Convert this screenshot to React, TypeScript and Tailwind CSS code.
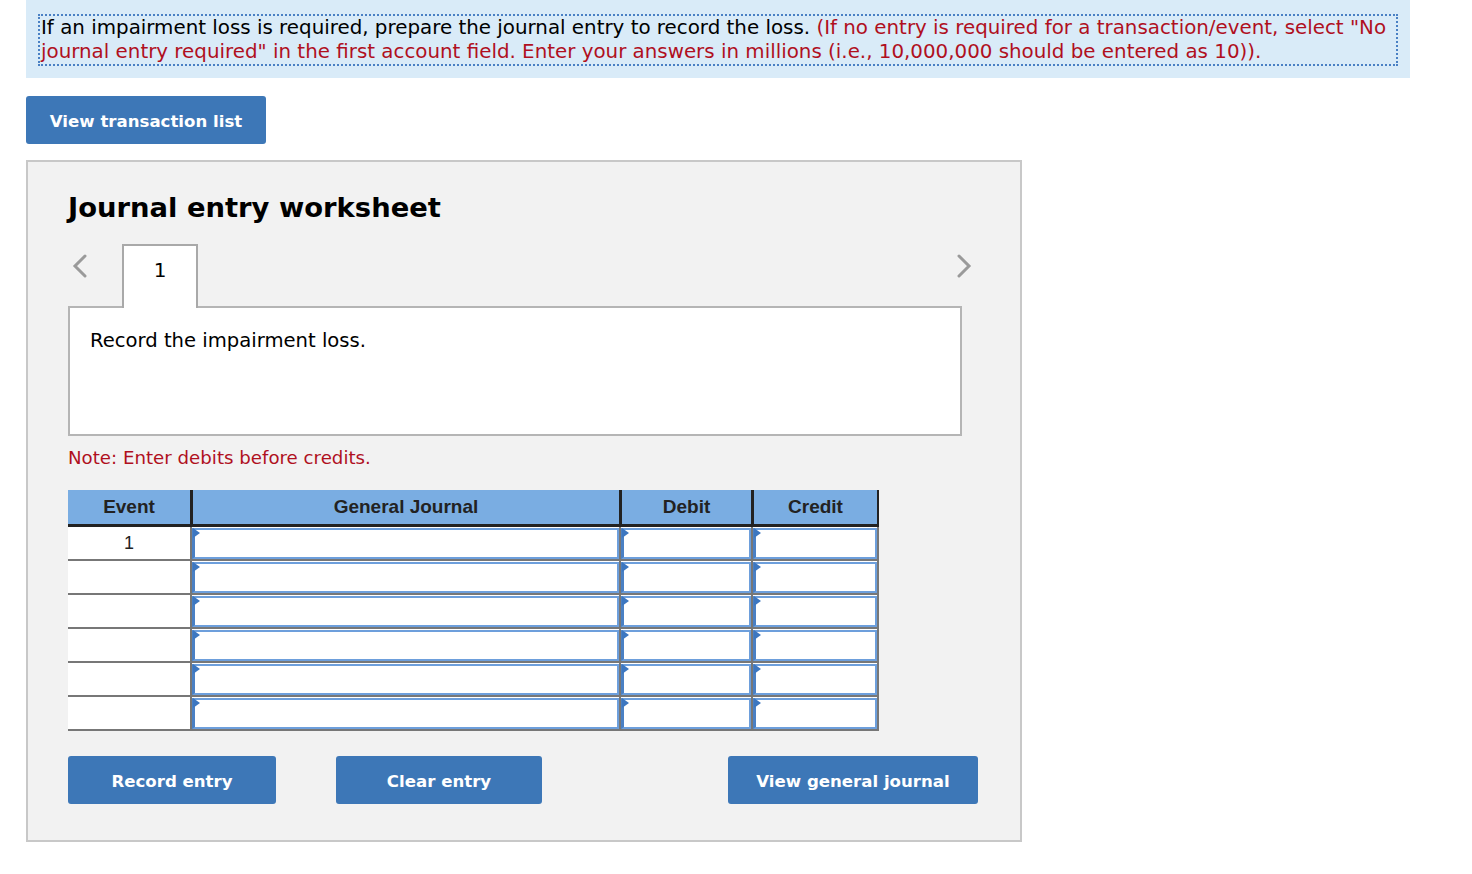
import React from 'react';

const verdana = { fontFamily: '"DejaVu Sans", Verdana, sans-serif' };
const arial = { fontFamily: '"Liberation Sans", Arial, sans-serif' };

function InputCell({ width }: { width: string }) {
  return (
    <div className={`${width} relative h-full border-l-2 border-[#777] bg-white`}>
      <div className="absolute inset-x-0 top-px bottom-0 border-2 border-[#6d9fdc] border-l-[3px] border-l-[#4a80c4]" />
      <div className="absolute left-[1px] top-[1px] h-0 w-0 border-y-[5px] border-l-[7px] border-y-transparent border-l-[#3d77c0]" />
    </div>
  );
}

function Row({ event }: { event?: string }) {
  return (
    <div className="flex h-[34px] border-b-2 border-[#777]">
      <div className="flex w-[122px] items-start justify-center bg-white pt-[3px] text-[18px] text-[#222]" style={arial}>
        {event}
      </div>
      <InputCell width="w-[429px]" />
      <InputCell width="w-[132px]" />
      <InputCell width="w-[126px]" />
      <div className="w-[2px] bg-[#777]" />
    </div>
  );
}

function BlueButton({ label, width }: { label: string; width: string }) {
  return (
    <button
      className={`${width} h-[48px] rounded-[3px] bg-[#3d77b7] pt-[4px] text-[16.6px] font-bold text-white`}
      style={verdana}
    >
      {label}
    </button>
  );
}

export default function App() {
  const rows = ['1', '', '', '', '', ''];

  return (
    <div className="min-h-screen bg-white pl-[26px]" style={verdana}>
      <div className="w-[1384px] bg-[#d9ebf8] px-[12px] pt-[14px] pb-[12px]">
        <div className="border-2 border-dotted border-[#4a80c4] pl-[1px] text-[19.85px] leading-[24px] text-black">
          If an impairment loss is required, prepare the journal entry to record the loss.{' '}
          <span className="text-[#b0101e]">
            (If no entry is required for a transaction/event, select "No journal entry required" in the first account
            field. Enter your answers in millions (i.e., 10,000,000 should be entered as 10)).
          </span>
        </div>
      </div>

      <div className="mt-[18px]">
        <BlueButton label="View transaction list" width="w-[240px]" />
      </div>

      <div className="mt-[16px] h-[682px] w-[996px] border-2 border-[#c8c8c8] bg-[#f2f2f2] pl-[40px] pt-[29px]">
        <h2 className="text-[27.4px] font-bold leading-[34px] text-black">Journal entry worksheet</h2>

        <div className="mt-[19px] flex h-[62px] w-[894px] items-end">
          <div className="flex h-full w-[54px] items-start pl-[2px] pt-[6px]">
            <svg width="20" height="32" viewBox="0 0 20 32" fill="none" stroke="#9a9a9a" strokeWidth="3" strokeLinecap="round">
              <path d="M15 6 L5 16 L15 26" />
            </svg>
          </div>
          <div className="relative z-10 -mb-[2px] flex h-[64px] w-[76px] items-start justify-center border-2 border-b-0 border-[#a9a9a9] bg-white pt-[9px] text-[20px] text-black">
            1
          </div>
          <div className="flex h-full flex-1 items-start justify-end pt-[6px]">
            <svg width="20" height="32" viewBox="0 0 20 32" fill="none" stroke="#9a9a9a" strokeWidth="3" strokeLinecap="round" className="mr-[-12px]">
              <path d="M5 6 L15 16 L5 26" />
            </svg>
          </div>
        </div>

        <div className="h-[130px] w-[894px] border-2 border-[#b5b5b5] bg-white px-[20px] pt-[19px] text-[19.6px] leading-[28px] text-black">
          Record the impairment loss.
        </div>

        <div className="mt-[10px] text-[18.2px] leading-[24px] text-[#b0101e]">Note: Enter debits before credits.</div>

        <div className="mt-[20px] w-[811px]" style={arial}>
          <div className="flex h-[37px] border-b-[3px] border-[#222] bg-[#7aade2] text-[19px] font-bold text-[#222]">
            <div className="flex w-[122px] items-center justify-center">Event</div>
            <div className="flex w-[429px] items-center justify-center border-l-[3px] border-[#222]">General Journal</div>
            <div className="flex w-[132px] items-center justify-center border-l-[3px] border-[#222]">Debit</div>
            <div className="flex w-[126px] items-center justify-center border-l-[3px] border-[#222]">Credit</div>
            <div className="w-[2px] bg-[#222]" />
          </div>
          {rows.map((r, i) => (
            <Row key={i} event={r} />
          ))}
        </div>

        <div className="mt-[25px] flex w-[910px]">
          <BlueButton label="Record entry" width="w-[208px]" />
          <div className="ml-[60px]">
            <BlueButton label="Clear entry" width="w-[206px]" />
          </div>
          <div className="ml-auto">
            <BlueButton label="View general journal" width="w-[250px]" />
          </div>
        </div>
      </div>
    </div>
  );
}
